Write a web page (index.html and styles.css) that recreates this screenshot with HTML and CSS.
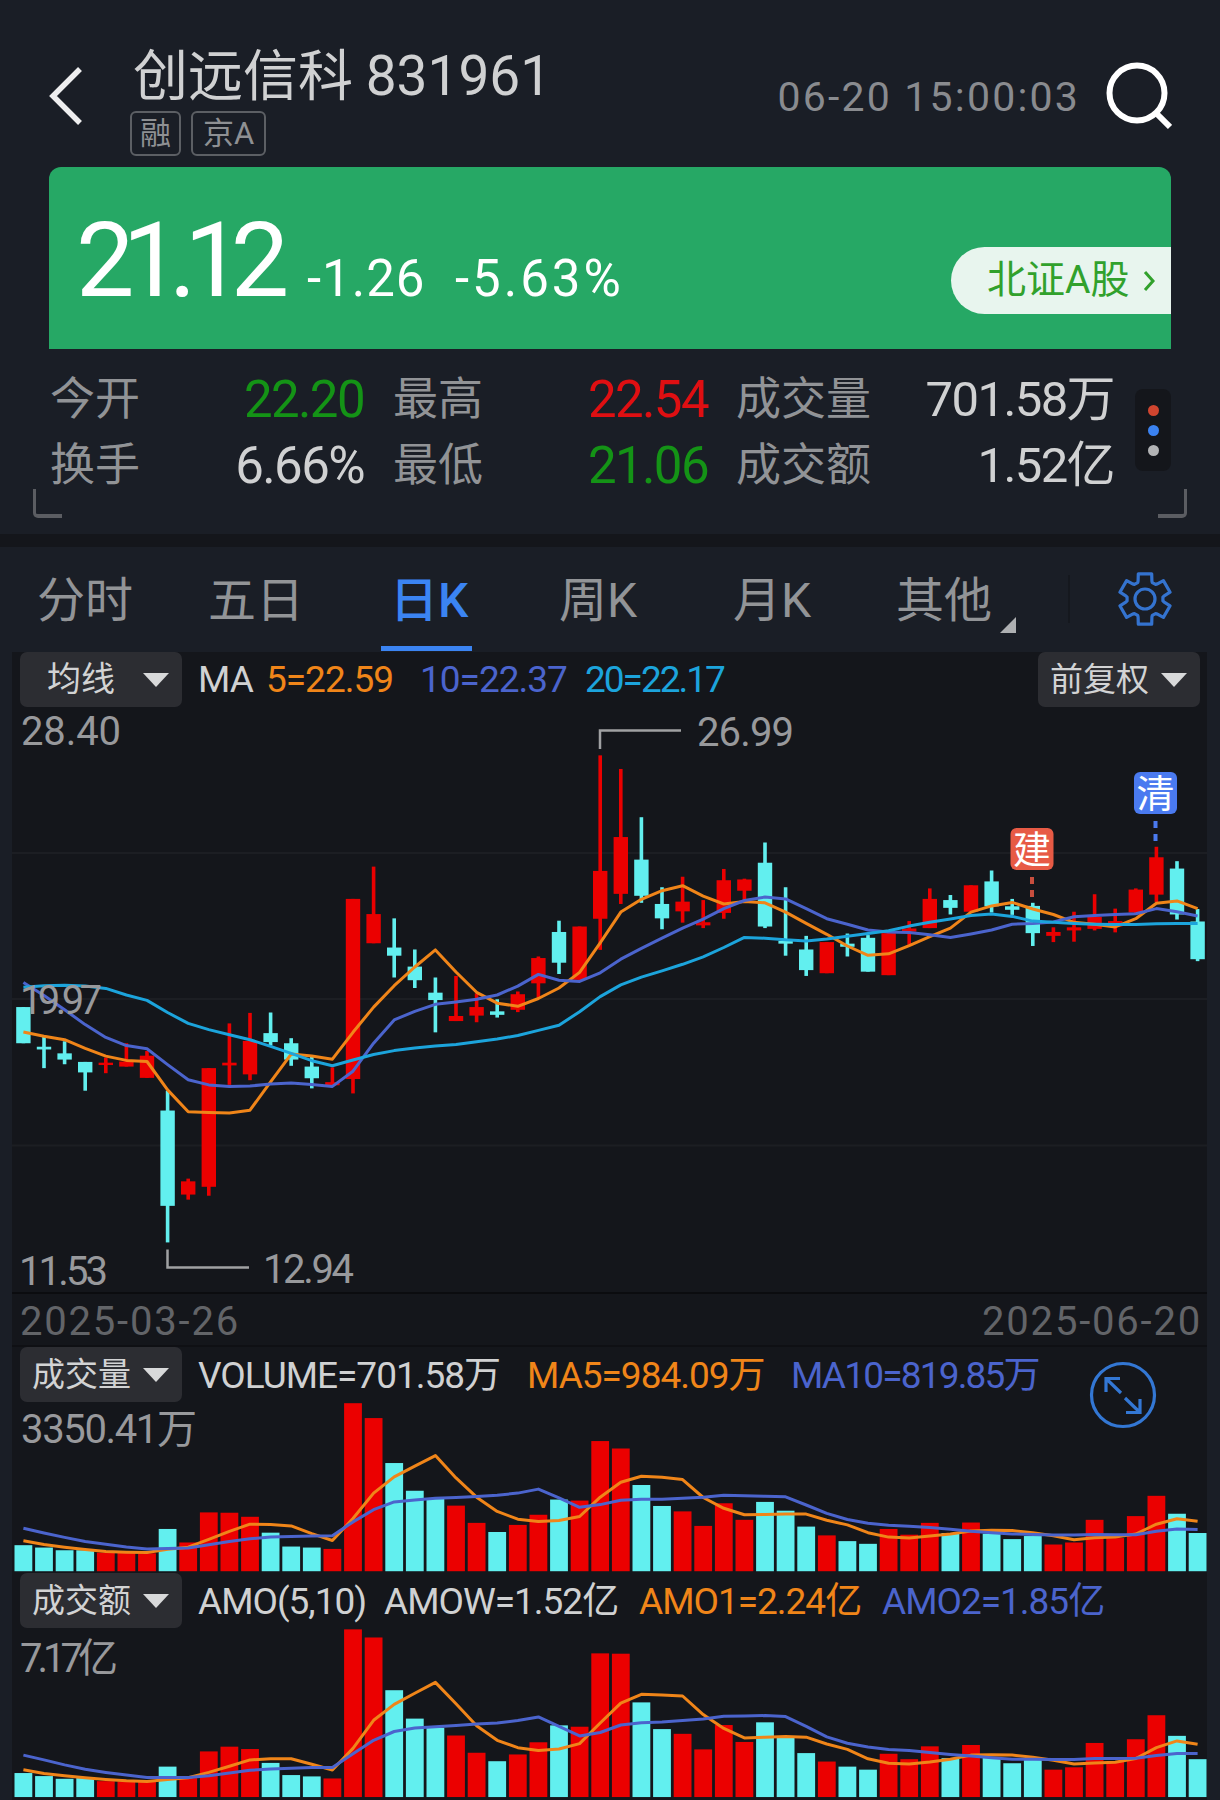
FILE: index.html
```html
<!DOCTYPE html>
<html lang="zh-CN">
<head>
  <meta charset="UTF-8" />
  <meta name="viewport" content="width=device-width, initial-scale=1.0" />
  <title>创远信科 831961</title>
  <link rel="stylesheet" href="styles.css">
</head>
<body>
  <header class="header">
    <svg class="back" width="34" height="60" viewBox="0 0 34 60"><path d="M31 3 4 30l27 27" /></svg>
    <div class="title-block">
      <h1 class="title">创远信科 <span class="code">831961</span></h1>
      <div class="badges">
        <span class="badge">融</span>
        <span class="badge">京A</span>
      </div>
    </div>
    <div class="time">06-20 15:00:03</div>
    <svg class="search" width="66" height="68" viewBox="0 0 66 68"><circle cx="31" cy="31" r="27.5" /><path d="M50 51 64 65" /></svg>
  </header>

  <section class="quote">
    <span class="price">21.12</span>
    <span class="change">-1.26</span>
    <span class="percent">-5.63%</span>
    <div class="market">北证A股
      <svg width="14" height="22" viewBox="0 0 14 22"><path d="M3 2l8 9-8 9" /></svg>
    </div>
  </section>

  <section class="stats">
    <div class="stat-grid">
      <span class="label">今开</span><span class="value down">22.20</span>
      <span class="label">最高</span><span class="value up">22.54</span>
      <span class="label">成交量</span><span class="value unit">701.58万</span>
      <span class="label">换手</span><span class="value">6.66%</span>
      <span class="label">最低</span><span class="value down">21.06</span>
      <span class="label">成交额</span><span class="value unit">1.52亿</span>
    </div>
    <div class="more"><i class="dot red"></i><i class="dot blue"></i><i class="dot gray"></i></div>
    <i class="corner left"></i>
    <i class="corner right"></i>
  </section>

  <nav class="tabs">
    <a class="tab">分时</a>
    <a class="tab">五日</a>
    <a class="tab active">日K</a>
    <a class="tab">周K</a>
    <a class="tab">月K</a>
    <a class="tab other">其他</a>
    <svg class="gear" width="56" height="58" viewBox="-28 -29 56 58"><path id="gear-path" /><circle r="10" /></svg>
  </nav>

  <main class="panel">
    <div class="toolbar">
      <button class="select">均线<i class="caret"></i></button>
      <div class="legend ma">
        <span>MA</span>
        <span class="orange">5=22.59</span>
        <span class="indigo">10=22.37</span>
        <span class="sky">20=22.17</span>
      </div>
      <button class="select adjust">前复权<i class="caret"></i></button>
    </div>
    <svg class="chart" id="kline" width="1195" height="585" viewBox="12 707 1195 585">
      <path class="grid-line" d="M12 853H1207M12 999H1207M12 1145.5H1207" />
      <g id="kline-data"></g>
      <path class="callout" d="M600 749V730.5H681M167.5 1249.5V1267.5H249" />
      <g class="axis">
        <text x="21" y="745" textLength="100">28.40</text>
        <text x="20" y="1014" textLength="82">19.97</text>
        <text x="19" y="1284.5" textLength="89">11.53</text>
        <text x="697" y="746" textLength="97">26.99</text>
        <text x="263" y="1283" textLength="91">12.94</text>
      </g>
      <path class="mark-line sell" d="M1155.5 821v20" />
      <path class="mark-line buy" d="M1032 877v20" />
      <rect class="mark sell" x="1134" y="772" width="43" height="42" rx="6" />
      <rect class="mark buy" x="1010.5" y="828" width="43" height="42" rx="6" />
      <text class="mark-text" x="1155.5" y="807">清</text>
      <text class="mark-text" x="1032" y="863">建</text>
    </svg>

    <div class="dates"><span>2025-03-26</span><span>2025-06-20</span></div>

    <div class="pane">
      <div class="toolbar">
        <button class="select small">成交量<i class="caret"></i></button>
        <div class="legend vol">
          <span>VOLUME=701.58万</span>
          <span class="orange">MA5=984.09万</span>
          <span class="indigo">MA10=819.85万</span>
        </div>
      </div>
      <svg class="chart" width="1195" height="171" viewBox="12 1402 1195 171">
        <g id="volume-data"></g>
        <g class="axis"><text x="21" y="1443" textLength="176">3350.41万</text></g>
      </svg>
      <svg class="expand" width="68" height="68" viewBox="-34 -34 68 68">
        <circle r="31.5" />
        <path d="M-2-2-17-16.500M-17-3V-16.500H-3M2 3 17 17.500M17 4V17.500H3" />
      </svg>
    </div>

    <div class="pane">
      <div class="toolbar">
        <button class="select small">成交额<i class="caret"></i></button>
        <div class="legend amo">
          <span>AMO(5,10)</span>
          <span>AMOW=1.52亿</span>
          <span class="orange">AMO1=2.24亿</span>
          <span class="indigo">AMO2=1.85亿</span>
        </div>
      </div>
      <svg class="chart" width="1195" height="172" viewBox="12 1628 1195 172">
        <g id="amount-data"></g>
        <g class="axis"><text x="20" y="1672" textLength="98">7.17亿</text></g>
      </svg>
    </div>
  </main>

  <script src="chart.js"></script>
</body>
</html>
```

FILE: styles.css
```css
* {
  margin: 0;
  padding: 0;
  box-sizing: border-box;
}

body {
  width: 1220px;
  height: 1800px;
  overflow: hidden;
  background: #1a1e26;
  color: #d0d1d2;
  font-family: Roboto, "Noto Sans CJK SC", sans-serif;
}

svg {
  display: block;
  flex: none;
}

.header {
  display: flex;
  height: 167px;
  padding: 40px 49px 0;
}

.back {
  margin-top: 26px;
  fill: none;
  stroke: #eeeeef;
  stroke-width: 5.5;
}

.title-block {
  margin-left: 47px;
}

.title {
  font-size: 55px;
  font-weight: 400;
  line-height: 72px;
  padding-left: 3px;
  white-space: nowrap;
  word-spacing: -1px;
}

.badges {
  display: flex;
  gap: 10px;
  margin-top: -1px;
}

.badge {
  height: 45px;
  padding: 0 8px;
  border: 2px solid #5c5f64;
  border-radius: 6px;
  color: #8e9093;
  font-size: 31px;
  line-height: 41px;
}

.badge:last-child {
  padding: 0 10px;
}

.time {
  margin-left: auto;
  padding-top: 33px;
  color: #898b8f;
  font-size: 41px;
  line-height: 48px;
  letter-spacing: 2.2px;
}

.search {
  margin: 22px -1px 0 26px;
  fill: none;
  stroke: #fff;
  stroke-width: 6;
}

.quote {
  display: flex;
  align-items: baseline;
  height: 182px;
  margin: 0 49px;
  padding: 48px 0 0 27px;
  border-radius: 12px 12px 0 0;
  background: #26a865;
  color: #fff;
  line-height: 92px;
}

.price {
  width: 231px;
  font-size: 104px;
  letter-spacing: -12px;
}

.change,
.percent {
  font-size: 51px;
}

.change {
  width: 148px;
  letter-spacing: 1px;
}

.percent {
  letter-spacing: 3px;
}

.market {
  display: flex;
  align-items: center;
  gap: 13px;
  align-self: flex-start;
  width: 220px;
  height: 67px;
  margin: 32px 0 0 auto;
  padding-left: 36px;
  border-radius: 34px 0 0 34px;
  background: #e8f5ee;
  color: #31a12c;
  font-size: 39px;
  line-height: 67px;
  white-space: nowrap;
}

.market svg {
  fill: none;
  stroke: #31a12c;
  stroke-width: 3;
}

.stats {
  position: relative;
  display: flex;
  height: 185px;
  padding: 18px 49px 0 50px;
}

.stat-grid {
  display: grid;
  flex: none;
  grid-template-columns: 120px 194px 148px 196px 170px 236px;
  grid-template-rows: 66px 66px;
  width: 1064px;
  line-height: 66px;
}

.label {
  color: #919396;
  font-size: 45px;
  white-space: nowrap;
}

.label:nth-child(6n + 3) {
  padding-left: 29px;
}

.label:nth-child(6n + 5) {
  padding-left: 28px;
}

.value {
  font-size: 51px;
  letter-spacing: -1.6px;
  text-align: right;
  white-space: nowrap;
}

.value.unit {
  font-size: 49px;
}

.up {
  color: #df0f12;
}

.down {
  color: #149316;
}

.more {
  display: flex;
  flex-direction: column;
  align-items: center;
  justify-content: center;
  gap: 9px;
  width: 36px;
  height: 82px;
  margin: 22px 0 0 auto;
  border-radius: 8px;
  background: #14161b;
}

.dot {
  width: 11px;
  height: 11px;
  border-radius: 50%;
}

.dot.red {
  background: #d0452f;
}

.dot.blue {
  background: #3b82f0;
}

.dot.gray {
  background: #b2b3b5;
}

.corner {
  position: absolute;
  bottom: 16px;
  width: 29px;
  height: 29px;
  border-bottom: 4px solid #5b5d62;
}

.corner.left {
  left: 33px;
  border-left: 3px solid #5b5d62;
  border-bottom-left-radius: 5px;
}

.corner.right {
  right: 33px;
  border-right: 3px solid #5b5d62;
  border-bottom-right-radius: 5px;
}

.tabs {
  display: flex;
  height: 117px;
  padding-left: 37px;
  border-top: 13px solid #14161b;
}

.tab {
  position: relative;
  width: 171px;
  color: #929497;
  font-size: 48px;
  line-height: 107px;
  white-space: nowrap;
}

.tab:nth-child(2) {
  width: 182px;
}

.tab.active {
  width: 169px;
  color: #3b84f2;
  font-weight: 500;
}

.tab.active::after {
  content: "";
  position: absolute;
  left: -9px;
  bottom: 0;
  width: 91px;
  height: 5px;
  background: #3b84f2;
}

.tab:nth-child(4) {
  width: 174px;
}

.tab:nth-child(5) {
  width: 163px;
}

.tab.other {
  width: 174px;
}

.tab.other::after {
  content: "";
  position: absolute;
  left: 104px;
  top: 70px;
  border-left: 16px solid transparent;
  border-bottom: 16px solid #aeb0b2;
}

.tab.other::before {
  content: "";
  position: absolute;
  right: 0;
  top: 28px;
  width: 2px;
  height: 48px;
  background: #15181e;
}

.gear {
  margin: 23px 0 0 47px;
  fill: none;
  stroke: #3473cf;
  stroke-width: 3.2;
  stroke-linejoin: round;
}

.panel {
  width: 1195px;
  height: 1149px;
  margin-left: 12px;
  background: #14161b;
}

.toolbar {
  display: flex;
  align-items: center;
  height: 55px;
  margin-top: 1px;
  padding: 0 7px 0 8px;
}

.pane .toolbar {
  margin-top: 0;
}

.select {
  display: flex;
  align-items: center;
  justify-content: flex-end;
  gap: 28px;
  flex: none;
  width: 162px;
  height: 55px;
  padding-right: 13px;
  border: none;
  border-radius: 7px;
  background: #2c2d32;
  color: #d2d3d4;
  font-family: inherit;
  font-size: 34px;
  line-height: 55px;
}

.select.small,
.select.adjust {
  gap: 12px;
  font-size: 33px;
}

.select.adjust {
  margin-left: auto;
}

.caret {
  border: 13px solid transparent;
  border-top: 14px solid #d8d9da;
  border-bottom: none;
}

.legend {
  display: grid;
  align-items: baseline;
  margin-left: 16px;
  font-size: 37px;
  letter-spacing: -1px;
  white-space: nowrap;
}

.legend.ma {
  grid-template-columns: 68px 154px 165px auto;
}

.legend.vol {
  grid-template-columns: 329px 264px auto;
  margin-bottom: 6px;
}

.legend.vol .indigo {
  letter-spacing: -1.8px;
}

.legend.amo {
  grid-template-columns: 186px 255px 243px auto;
  margin-bottom: 6px;
}

.orange {
  color: #f08519;
}

.indigo {
  color: #4b64cd;
}

.sky {
  color: #1ca4dc;
  letter-spacing: -2px;
}

.chart {
  overflow: visible;
}

.grid-line {
  stroke: #1c1e23;
  stroke-width: 2;
}

.axis text {
  fill: #98999c;
  font-size: 40px;
}

.callout {
  fill: none;
  stroke: #a0a1a3;
  stroke-width: 2.5;
}

.rise {
  fill: #eb0000;
}

.fall {
  fill: #62efef;
}

.line {
  fill: none;
  stroke-width: 3;
  stroke-linejoin: round;
}

.line.ma5 {
  stroke: #f08519;
}

.line.ma10 {
  stroke: #4b64cd;
}

.line.ma20 {
  stroke: #1ca4dc;
}

.mark.sell {
  fill: #4a7af0;
}

.mark.buy {
  fill: #e75a45;
}

.mark-line {
  stroke-width: 4;
  stroke-dasharray: 7 6;
}

.mark-line.sell {
  stroke: #4a7af0;
}

.mark-line.buy {
  stroke: #c84e3e;
}

.mark-text {
  fill: #fff;
  font-size: 38px;
  text-anchor: middle;
}

.dates {
  display: flex;
  align-items: center;
  justify-content: space-between;
  height: 55px;
  padding: 3px 5px 0 8px;
  border-top: 2px solid #0b0c0f;
  border-bottom: 2px solid #0f1014;
  color: #626468;
  font-size: 40px;
  letter-spacing: 1.8px;
}

.pane {
  position: relative;
}

.expand {
  position: absolute;
  left: 1077px;
  top: 14px;
  fill: none;
  stroke: #3377d4;
  stroke-width: 3.2;
}
```

FILE: chart.js
```javascript
const FIRST_X = 23.4;
const STEP = 20.6;

// high, body top, body bottom, low, rise
const candles = [
  [815,815,908,908,0], [890,917,924,972,0], [903,934,950,962,0], [956,956,983,1030,0],
  [945,958,964,985,1], [908,955,968,968,1], [928,940,997,997,1], [1030,1081,1326,1420,0],
  [1256,1263,1297,1310,1], [972,972,1277,1300,1], [857,958,965,1015,1], [830,902,988,1003,1],
  [829,882,905,914,0], [895,908,950,966,0], [940,968,998,1024,0], [970,1008,1016,1016,1],
  [537,537,1000,1037,1], [454,576,651,651,1], [587,662,683,739,0], [667,711,746,766,0],
  [739,778,797,880,0], [735,838,851,851,1], [780,815,837,854,1], [795,826,835,842,0],
  [775,782,822,828,1], [685,689,754,790,1], [593,622,701,730,0], [608,608,745,745,1],
  [168,465,588,668,1], [203,378,524,550,1], [327,436,529,547,0], [507,550,587,615,0],
  [480,544,569,598,1], [540,597,605,612,1], [460,489,573,588,1], [485,487,516,540,1],
  [392,444,608,612,0], [507,645,652,683,0], [632,667,720,735,0], [648,648,728,728,1],
  [626,652,660,685,0], [630,637,724,724,0], [625,625,733,733,1], [594,613,621,655,1],
  [510,537,612,612,1], [527,540,560,577,0], [502,502,570,570,1], [464,492,556,572,0],
  [537,556,565,578,0], [547,555,625,658,0], [610,622,632,648,1], [570,610,618,647,1],
  [525,583,614,618,1], [562,594,608,623,1], [510,513,572,575,1], [403,430,526,545,1],
  [440,459,577,590,0], [563,595,692,697,0]
];

const priceLines = {
  ma5: [879,890,899,921,941,952,955,1028,1084,1086,1087,1080,1007,936,941,949,880,815,760,712,668,725,777,805,813,793,766,726,650,571,538,516,503,530,550,544,547,571,600,628,658,682,678,657,634,612,571,555,546,563,577,597,602,609,588,548,542,562],
  ma10: [752,785,822,860,893,914,922,963,1002,1015,1019,1018,1013,1010,1014,1019,980,908,848,826,808,802,795,784,761,731,746,749,727,692,664,638,612,589,562,541,532,537,562,588,602,617,622,623,629,636,627,617,602,600,596,583,580,577,575,562,570,581],
  ma20: [764,760,759,761,767,784,798,829,857,873,886,899,916,934,953,966,951,937,927,920,915,911,904,897,888,875,862,827,788,758,738,722,705,686,662,636,638,642,645,640,633,626,619,607,597,589,580,576,582,594,597,600,602,603,603,601,600,600]
};

const volume = [814,821,829,829,836,836,838,766,806,717,718,730,777,818,821,825,394,438,571,653,676,697,748,775,754,724,679,682,506,528,636,698,714,757,690,739,686,712,759,785,802,810,766,783,748,778,747,780,796,787,812,806,739,793,728,668,721,778];

const volumeLines = {
  ma5: [801,812,820,827,833,835,836,826,820,797,773,752,753,757,780,800,735,660,612,580,549,615,672,714,737,744,741,729,672,628,610,613,620,673,705,724,723,722,722,740,754,777,790,793,787,781,772,770,771,777,786,798,792,790,781,752,736,743],
  ma10: [764,778,791,803,811,819,825,824,822,813,803,795,790,788,787,786,745,709,686,680,675,673,670,666,660,648,674,702,694,681,678,678,675,672,666,668,669,671,695,720,738,749,755,758,762,767,773,777,781,782,784,784,782,783,783,773,766,768]
};

const amount = [1488,1497,1505,1503,1512,1513,1514,1469,1503,1424,1410,1417,1458,1494,1498,1504,1063,1087,1243,1327,1354,1377,1428,1453,1433,1397,1347,1351,1134,1135,1279,1358,1372,1418,1346,1396,1338,1380,1429,1454,1469,1478,1431,1447,1409,1444,1405,1441,1459,1447,1478,1471,1399,1454,1388,1317,1378,1447];

const amountLines = {
  ma5: [1478,1489,1496,1502,1507,1511,1513,1507,1502,1486,1468,1449,1446,1446,1462,1479,1415,1332,1285,1252,1220,1283,1348,1391,1413,1421,1417,1401,1340,1281,1255,1257,1260,1315,1356,1384,1382,1380,1382,1402,1418,1446,1459,1461,1455,1447,1435,1434,1435,1441,1450,1461,1458,1456,1445,1413,1393,1403],
  ma10: [1435,1449,1464,1477,1486,1494,1501,1501,1501,1496,1488,1480,1476,1474,1472,1472,1431,1391,1365,1355,1351,1347,1343,1340,1333,1322,1350,1378,1368,1346,1339,1337,1333,1328,1320,1319,1318,1321,1350,1381,1400,1411,1418,1421,1427,1433,1438,1443,1447,1447,1448,1448,1445,1445,1444,1436,1430,1430]
};

const x = i => FIRST_X + i * STEP;
const priceY = v => 690 + v / 2.5705;
const barY = v => 1270 + v / 2.958;

function rect(cx, width, top, bottom, rise) {
  return `<rect class="${rise ? 'rise' : 'fall'}" x="${cx - width / 2}" y="${top}" width="${width}" height="${bottom - top}" />`;
}

function lines(series, y) {
  return Object.keys(series).map(name => {
    const points = series[name].map((v, i) => `${x(i).toFixed(1)},${y(v).toFixed(1)}`);
    return `<polyline class="line ${name}" points="${points.join(' ')}" />`;
  }).join('');
}

function drawCandles() {
  const shapes = candles.map(([high, top, bottom, low, rise], i) =>
    rect(x(i), 3.6, priceY(high), priceY(low), rise) +
    rect(x(i), 14.4, priceY(top), priceY(bottom), rise)
  );
  document.getElementById('kline-data').innerHTML = shapes.join('') + lines(priceLines, priceY);
}

function drawBars(id, tops, series, base) {
  const shapes = tops.map((v, i) => rect(x(i), 17.8, barY(v), barY(base), candles[i][4]));
  document.getElementById(id).innerHTML = shapes.join('') + lines(series, barY);
}

// six teeth, each as four corners: [angle offset, radius]
function drawGear() {
  const points = [];
  for (let i = 0; i < 6; i++) {
    const a = i * Math.PI / 3 - Math.PI / 2;
    [[-0.42, 18], [-0.36, 19.5], [-0.26, 26], [0.26, 26], [0.36, 19.5], [0.42, 18]].forEach(([d, r]) => {
      points.push(`${(r * Math.cos(a + d)).toFixed(1)} ${(r * Math.sin(a + d)).toFixed(1)}`);
    });
  }
  document.getElementById('gear-path').setAttribute('d', 'M' + points.join('L') + 'Z');
}

drawCandles();
drawBars('volume-data', volume, volumeLines, 891);
drawBars('amount-data', amount, amountLines, 1559);
drawGear();
```
